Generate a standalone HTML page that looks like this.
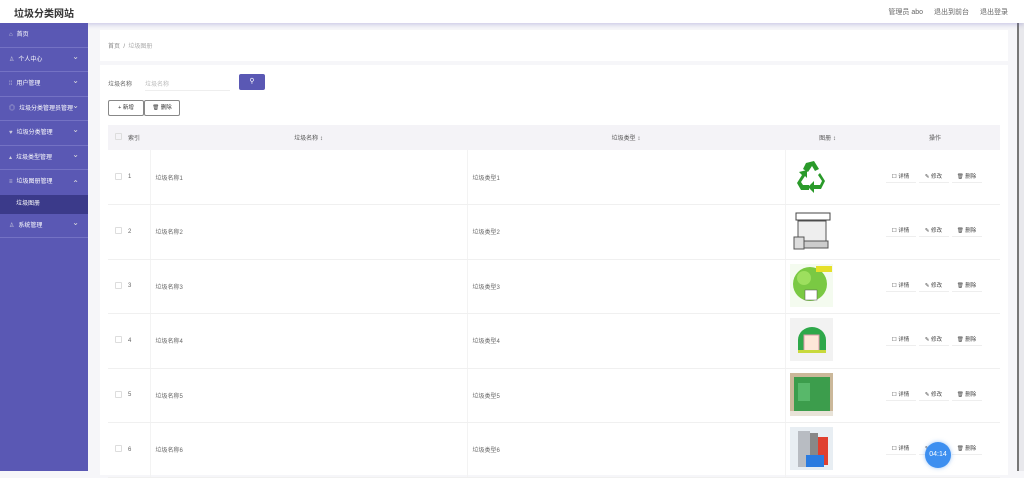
<!DOCTYPE html>
<html><head><meta charset="utf-8"><style>
*{margin:0;padding:0;box-sizing:border-box}
body{width:1024px;height:471px;overflow:hidden;background:#f6f6f9;font-family:"Liberation Sans","Noto Sans CJK SC",sans-serif;font-size:6px;color:#555;position:relative}
.hd{position:absolute;left:0;top:0;width:1024px;height:23px;background:#fff;box-shadow:0 2px 4px rgba(90,88,180,.25);z-index:2}
.hd .t{position:absolute;left:14px;top:5px;font-size:10px;color:#333;font-weight:bold}
.hd .r{position:absolute;right:16px;top:7px;font-size:7px;color:#666;word-spacing:0}
.hd .r span{margin-left:11px}
.sb{position:absolute;left:0;top:23px;width:88px;height:448px;background:#5a58b4}
.it{height:24.5px;border-bottom:1px solid #7472c4;color:#fff;font-size:6px;line-height:24px;padding-left:9px;position:relative}
.it:after{content:"⌄";position:absolute;right:9px;top:-3px;font-size:8px;color:#ddd}
.it.n:after{content:""}
.it.u:after{content:"⌃";top:2px}
.it i{font-style:normal;color:#ccd;margin-right:4px}
.sub{height:19px;background:#3b3a8a;color:#fff;line-height:19px;padding-left:16px;font-size:6px}
.bc{position:absolute;left:100px;top:30px;width:908px;height:31px;background:#fff;font-size:6px;color:#888;padding:11px 8px}
.ct{position:absolute;left:100px;top:65px;width:908px;height:410px;background:#fff}
.lbl{position:absolute;left:8px;top:14px;color:#666}
.inp{position:absolute;left:45px;top:14px;color:#bbb;width:85px;border-bottom:1px solid #eee;height:12px}
.sbtn{position:absolute;left:139px;top:9px;width:26px;height:16px;background:#5a58b4;border-radius:2px;color:#fff;text-align:center;line-height:15px;font-size:7px}
.b{position:absolute;top:35px;height:16px;border:1px solid #888;border-radius:2px;background:#fff;line-height:14px;text-align:center;font-size:5.5px;color:#333}
table{position:absolute;left:8px;top:60px;width:892px;border-collapse:collapse}
th{background:#f4f3f7;height:25px;font-weight:normal;color:#555;font-size:6px}
td{height:54.5px;border-bottom:1px solid #f0f0f0;font-size:6px;color:#666}
td.b2{border-left:1px solid #f3f3f3}
.cb{display:inline-block;width:7px;height:7px;border:1px solid #ddd;border-radius:1px}
.img{width:43px;height:43px;margin-left:4px}
.ac{font-size:5.5px;color:#444;word-spacing:0}
.ac span{display:inline-block;width:30px;margin-right:3px;border-bottom:1px solid #eee;padding-bottom:2px}
.clock{position:absolute;left:925px;top:442px;width:26px;height:26px;border-radius:50%;background:#3d8ff0;color:#fff;font-size:7px;text-align:center;line-height:26px;box-shadow:0 0 4px rgba(60,140,240,.5)}
.scr{position:absolute;left:1017px;top:23px;width:7px;height:448px;background:#e8e8ec;border-left:2px solid #777}
</style></head><body>
<div class="hd"><div class="t">垃圾分类网站</div><div class="r"><span>管理员 abo</span><span>退出到前台</span><span>退出登录</span></div></div>
<div class="sb">
<div class="it n"><i>⌂</i>首页</div>
<div class="it"><i>♙</i>个人中心</div>
<div class="it"><i>⁞⁞</i>用户管理</div>
<div class="it"><i>◎</i>垃圾分类管理员管理</div>
<div class="it"><i>♥</i>垃圾分类管理</div>
<div class="it"><i>▴</i>垃圾类型管理</div>
<div class="it u" style="border-bottom:none"><i>≡</i>垃圾图册管理</div>
<div class="sub">垃圾图册</div>
<div class="it"><i>♙</i>系统管理</div>
</div>
<div class="bc">首页 &nbsp;/&nbsp; <span style="color:#aaa">垃圾图册</span></div>
<div class="ct">
<div class="lbl">垃圾名称</div><div class="inp">垃圾名称</div>
<div class="sbtn">⚲</div>
<div class="b" style="left:8px;width:36px">+ 新增</div>
<div class="b" style="left:44px;width:36px">🗑 删除</div>
<table>
<tr><th style="width:20px"><span class="cb"></span></th><th style="width:22px;text-align:left">索引</th><th style="width:317px">垃圾名称 ↕</th><th style="width:318px">垃圾类型 ↕</th><th style="width:85px">图册 ↕</th><th>操作</th></tr>
<tr><td align="center"><span class="cb"></span></td><td>1</td><td class="b2" style="padding-left:5px">垃圾名称1</td><td class="b2" style="padding-left:5px">垃圾类型1</td><td class="b2"><svg class="img" viewBox="0 0 43 43"><g fill="#2a9a2a"><path d="M16 8l8-2 5 8-4 2 -3-5-4 6-5-3z"/><path d="M30 18l5 8-4 8-7 0 0 4-6-6 6-6 0 4 6 0 2-4-4-6z"/><path d="M12 20l-5 8 4 7 8 0 0-5-6 0-2-3 4-6 2 2 0-8-8 2z"/></g></svg></td><td class="ac" align="center"><span>☐ 详情</span><span>✎ 修改</span><span>🗑 删除</span></td></tr>
<tr><td align="center"><span class="cb"></span></td><td>2</td><td class="b2" style="padding-left:5px">垃圾名称2</td><td class="b2" style="padding-left:5px">垃圾类型2</td><td class="b2"><svg class="img" viewBox="0 0 43 43"><rect x="6" y="4" width="34" height="7" fill="none" stroke="#444"/><rect x="8" y="12" width="28" height="20" fill="#eee" stroke="#555"/><rect x="4" y="28" width="10" height="12" fill="#ddd" stroke="#555"/><rect x="14" y="32" width="24" height="7" fill="#ccc" stroke="#555"/></svg></td><td class="ac" align="center"><span>☐ 详情</span><span>✎ 修改</span><span>🗑 删除</span></td></tr>
<tr><td align="center"><span class="cb"></span></td><td>3</td><td class="b2" style="padding-left:5px">垃圾名称3</td><td class="b2" style="padding-left:5px">垃圾类型3</td><td class="b2"><svg class="img" viewBox="0 0 43 43"><rect width="43" height="43" fill="#f4fbef"/><circle cx="20" cy="20" r="17" fill="#7ac943"/><circle cx="14" cy="14" r="7" fill="#9ddf5e"/><rect x="26" y="2" width="16" height="6" fill="#e6e02a"/><rect x="15" y="26" width="12" height="10" fill="#fff" stroke="#555" stroke-width=".5"/></svg></td><td class="ac" align="center"><span>☐ 详情</span><span>✎ 修改</span><span>🗑 删除</span></td></tr>
<tr><td align="center"><span class="cb"></span></td><td>4</td><td class="b2" style="padding-left:5px">垃圾名称4</td><td class="b2" style="padding-left:5px">垃圾类型4</td><td class="b2"><svg class="img" viewBox="0 0 43 43"><rect width="43" height="43" fill="#f2f2f2"/><path d="M8 22a14 13 0 0 1 28 0v10H8z" fill="#2ea84a"/><rect x="14" y="17" width="15" height="16" fill="#fde7d8" stroke="#d9a"/><rect x="8" y="32" width="28" height="3" fill="#c8d93c"/></svg></td><td class="ac" align="center"><span>☐ 详情</span><span>✎ 修改</span><span>🗑 删除</span></td></tr>
<tr><td align="center"><span class="cb"></span></td><td>5</td><td class="b2" style="padding-left:5px">垃圾名称5</td><td class="b2" style="padding-left:5px">垃圾类型5</td><td class="b2"><svg class="img" viewBox="0 0 43 43"><rect width="43" height="43" fill="#cbb89a"/><rect x="4" y="4" width="36" height="37" fill="#3c9d4c"/><rect x="8" y="10" width="12" height="18" fill="#58b86a"/><rect x="0" y="38" width="43" height="5" fill="#e8e3d8"/></svg></td><td class="ac" align="center"><span>☐ 详情</span><span>✎ 修改</span><span>🗑 删除</span></td></tr>
<tr><td align="center"><span class="cb"></span></td><td>6</td><td class="b2" style="padding-left:5px">垃圾名称6</td><td class="b2" style="padding-left:5px">垃圾类型6</td><td class="b2"><svg class="img" viewBox="0 0 43 43"><rect width="43" height="43" fill="#e8eef3"/><rect x="8" y="4" width="12" height="36" fill="#b8bcc2"/><rect x="20" y="6" width="8" height="30" fill="#888"/><rect x="28" y="10" width="10" height="28" fill="#e04030"/><rect x="16" y="28" width="18" height="12" fill="#2a7be0"/></svg></td><td class="ac" align="center"><span>☐ 详情</span><span>✎ 修改</span><span>🗑 删除</span></td></tr>
</table>
</div>
<div class="scr"></div>
<div class="clock">04:14</div>
</body></html>
